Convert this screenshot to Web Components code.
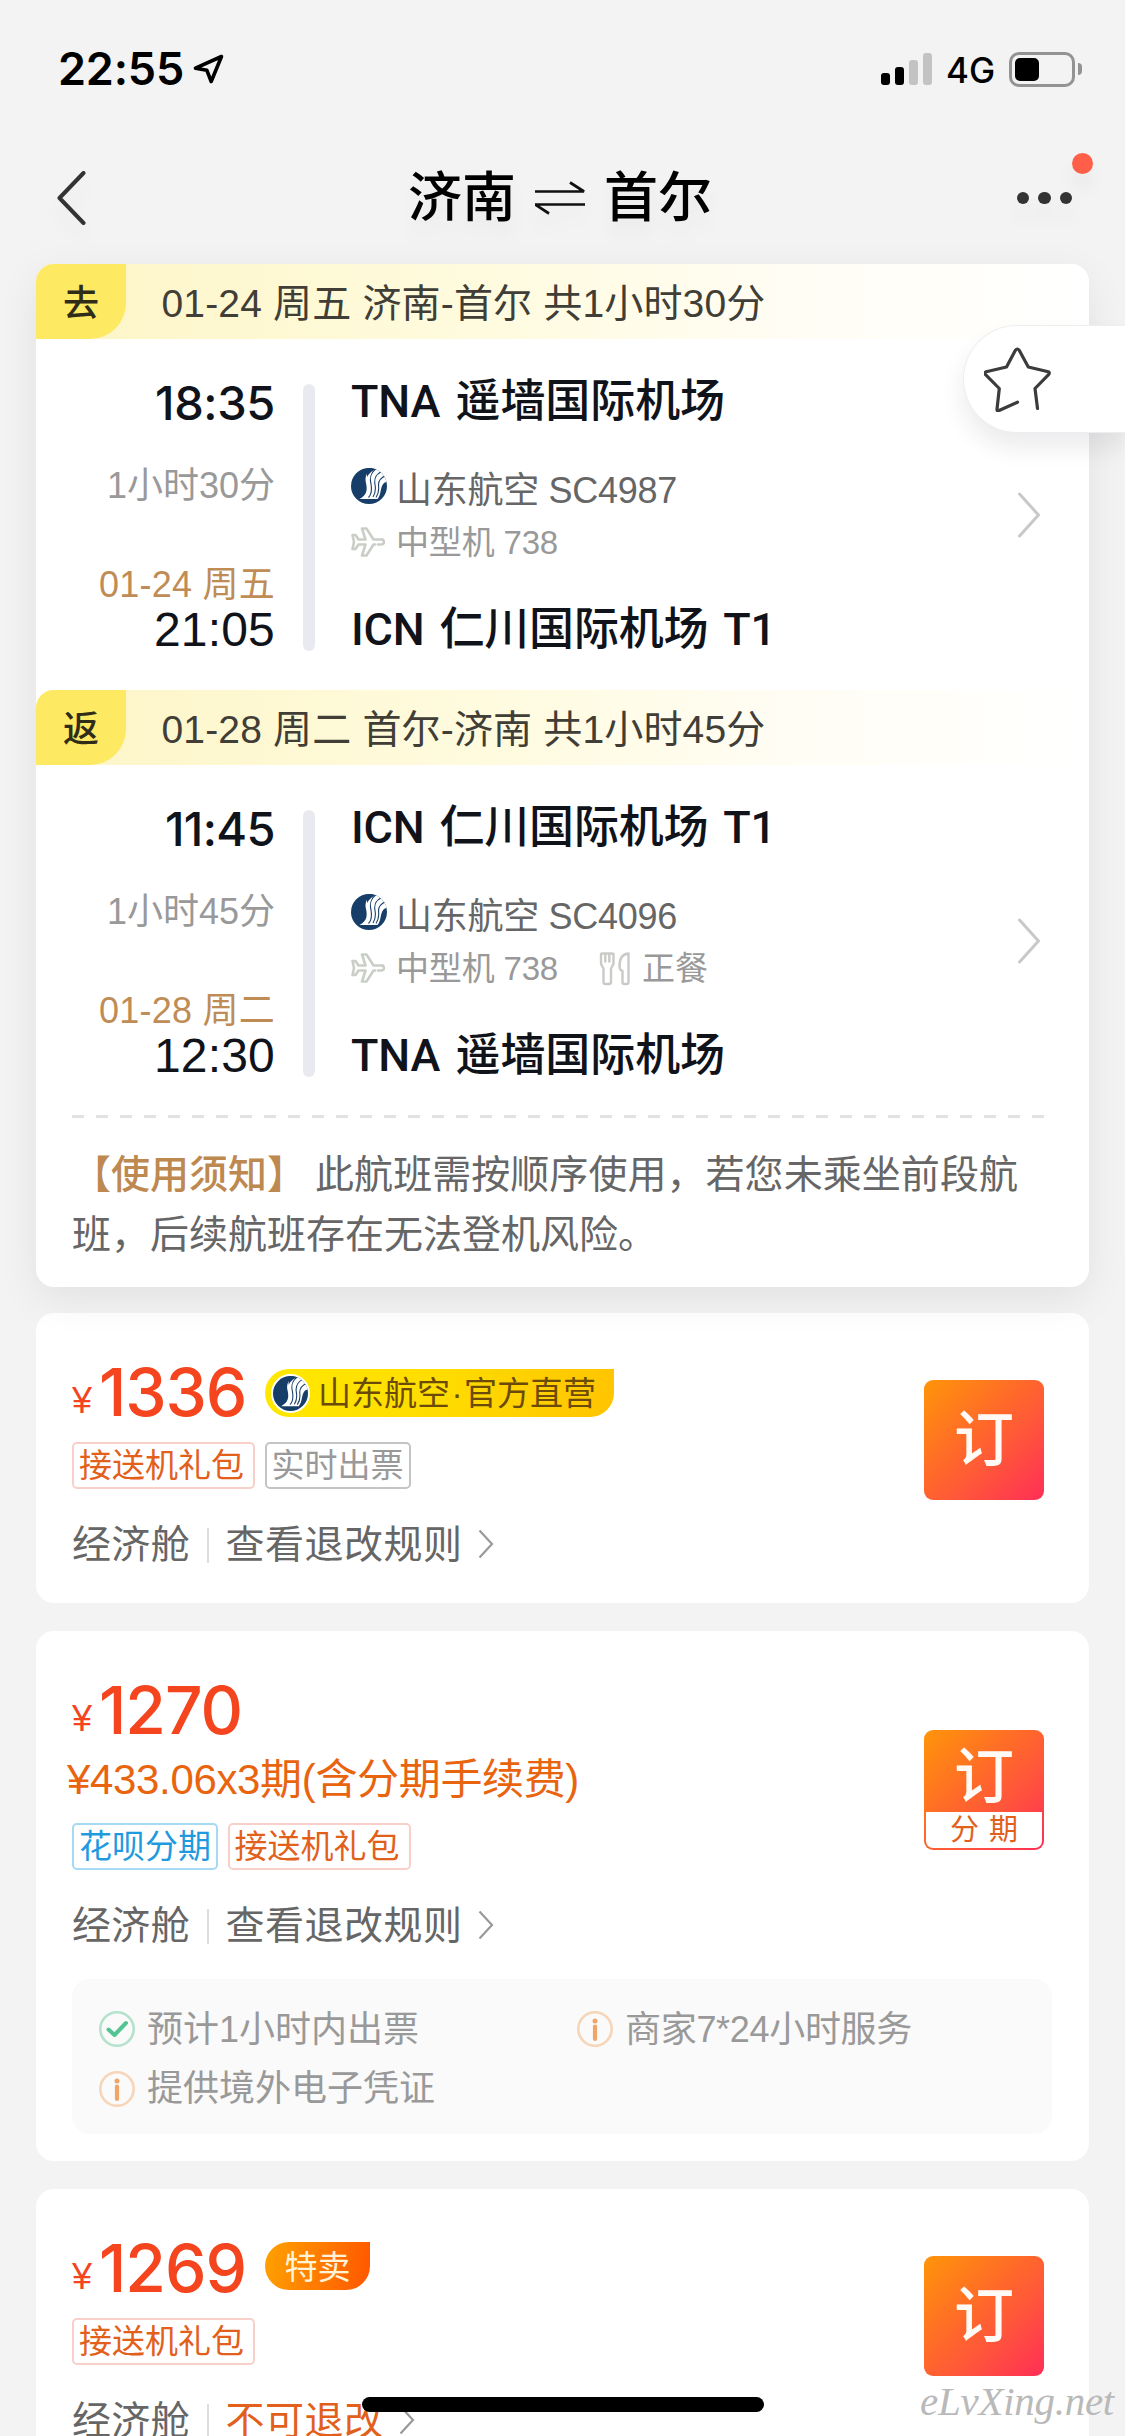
<!DOCTYPE html>
<html lang="zh-CN">
<head>
<meta charset="utf-8">
<title>济南 ⇌ 首尔</title>
<style>
html,body{margin:0;padding:0}
body{width:1125px;height:2436px;overflow:hidden;background:#f3f3f3;font-family:"Liberation Sans","Noto Sans CJK SC",sans-serif}
</style>
</head>
<body>
<flight-page></flight-page>
<script>
const def=(name,html,setup)=>customElements.define(name,class extends HTMLElement{
  constructor(){super();this.attachShadow({mode:'open'});}
  connectedCallback(){
    const a=k=>this.getAttribute(k)||'';
    this.shadowRoot.innerHTML=typeof html==='function'?html(a,this):html;
    if(setup)setup(this,a);
  }
});

/* One line of text. s: size, h: line height, w: set width reached by tracking, f: ui | label */
const FONTS={ui:'Inter,"Noto Sans CJK SC",sans-serif',label:'Roboto,"Noto Sans CJK SC",sans-serif'};
def('text-run',a=>`<style>
:host{display:block;flex:none;white-space:nowrap;font-size:${a('s')}px;line-height:${a('h')||50}px;height:${a('h')||50}px;
${a('f')?`font-family:${FONTS[a('f')]};`:''}${a('f')==='label'?'word-spacing:4px;':''}${a('wt')?`font-weight:${a('wt')};`:''}${a('c')?`color:${a('c')};`:''}}
span{display:inline-block;vertical-align:top}
</style><span><slot></slot></span>`,(el,a)=>{
  const w=+a('w');if(!w)return;
  const sp=el.shadowRoot.querySelector('span');
  const n=[...el.textContent].length;
  sp.style.letterSpacing=((w-sp.getBoundingClientRect().width)/n).toFixed(3)+'px';
});

def('airline-logo',a=>`<style>:host{display:block;flex:none;width:${a('size')||36}px;height:${a('size')||36}px}svg{display:block;width:100%;height:100%}</style>
<svg viewBox="0 0 36 36"><defs><clipPath id="c"><circle cx="18" cy="18" r="18"/></clipPath></defs>
<circle cx="18" cy="18" r="18" fill="#173e68"/>
<g clip-path="url(#c)"><path d="M22 0C15.500 4 13.500 9 15 15C16.500 22 16 27 8.500 31H26.500C30 27 29 22 31.500 17C32.500 15 34 14 36 14V0Z" fill="#fff"/>
<path d="M26 0C19 5 18.500 10 20 16C21 22 20 27 17.500 29.500M30.500 3.500C24 7 23 11 24 16.500C25 22 24 26 22 29M35 7.500C29 10 27 13 27.600 18C28 22 27.500 26 25 29.500" fill="none" stroke="#173e68" stroke-width="1.100"/>
<path d="M16 0H27C22 2 18 5 16 9Z" fill="#173e68"/></g></svg>`);

const ICONS={
plane:[34,30,'<path d="M32 12.500H22.500L15.500 1.500H11L14.500 12.500H7.500L4.500 8H1.500L3 15L1.500 22H4.500L7.500 17.500H14.500L11 28.500H15.500L22.500 17.500H24M27 17.500H30C34 17.500 34 12.500 30 12.500" fill="none" stroke="#c9cfc7" stroke-width="2.600" stroke-linejoin="round" stroke-linecap="round"/>'],
meal:[32,34,'<path d="M2 2.500V11C2 14 4.500 15 4.500 17V30Q4.500 32 6.500 32H10Q12 32 12 30V17C12 15 14.500 14 14.500 11V2.500Q14.500 1.500 13 1.500H3.500Q2 1.500 2 2.500ZM6.300 2V10.500M10.300 2V10.500M29.500 1.500C22.500 2 20.500 8 20.500 14C20.500 17 22 18.500 23.500 19V30Q23.500 32 25.500 32H27.500Q29.500 32 29.500 30Z" fill="none" stroke="#c9cbc7" stroke-width="2.400" stroke-linejoin="round"/>'],
next:[24,46,'<path d="M2.500 2L21.500 23L2.500 44" fill="none" stroke="#c8c8c8" stroke-width="3" stroke-linecap="round" stroke-linejoin="round"/>'],
more:[16,30,'<path d="M1.500 1.500L14 15L1.500 28.500" fill="none" stroke="#999" stroke-width="2.200"/>'],
back:[30,54,'<path d="M26.500 2L2.500 27L26.500 52" fill="none" stroke="#333" stroke-width="4" stroke-linecap="round" stroke-linejoin="round"/>'],
swap:[50,34,'<path d="M0 10.500H49L35 1.500M50 23.500H0L14 32.500" fill="none" stroke="#111" stroke-width="2.700" stroke-linejoin="bevel"/>'],
star:[68,66,'<path d="M35.500 55.200L16.500 63.800Q14.800 64.200 15 62.200L17.300 41.500L3.300 27.300Q2 25.500 4.200 24.800L24.500 20L33.400 3.200Q35.300 .800 37.200 3.200L46.300 20L66.300 24.800Q68 25.500 66.800 27.300L53 41.500L55.500 61.500" transform="translate(-2 1)" fill="none" stroke="#3c3c3c" stroke-width="3.200" stroke-linecap="round" stroke-linejoin="round"/>'],
locate:[32,32,'<path d="M28.500 3.500L2.500 15.200L13.800 17.200L18.200 28.500Z" fill="none" stroke="#000" stroke-width="3.600" stroke-linejoin="round"/>'],
ok:[36,36,'<circle cx="18" cy="18" r="16.700" fill="none" stroke="#b5e2cc" stroke-width="2.600"/><path d="M9.500 18.500L15.500 24L27 12" fill="none" stroke="#53c492" stroke-width="4" stroke-linecap="round" stroke-linejoin="round"/>'],
info:[36,36,'<circle cx="18" cy="18" r="16.700" fill="none" stroke="#f7d5b8" stroke-width="2.600"/><circle cx="18" cy="10" r="2.500" fill="#efa468"/><path d="M18 15.500V28" stroke="#efa468" stroke-width="4.200" stroke-linecap="round"/>']
};
def('line-icon',a=>{const[w,h,p]=ICONS[a('name')];return `<style>:host{display:block;flex:none;width:${w}px;height:${h}px}svg{display:block}</style><svg width="${w}" height="${h}" viewBox="0 0 ${w} ${h}">${p}</svg>`});

def('status-bar',`<style>
:host{display:flex;align-items:center;height:138px;padding:0 43px 0 58px;box-sizing:border-box;color:#000}
line-icon{margin-left:9px}
.bars{margin-left:auto;display:flex;align-items:flex-end;gap:5px;height:32px}
.bars i{width:9px;border-radius:3px;background:#000}.bars .o{background:#c3c3c3}
.net{margin:1px 0 0 14px}
.bat{margin-left:14px;width:66px;height:35px;box-sizing:border-box;border:3px solid #939393;border-radius:10px;padding:3px}
.bat i{display:block;width:24px;height:23px;border-radius:5px;background:#000}
.cap{width:4px;height:12px;margin-left:3px;border-radius:0 4px 4px 0;background:#939393}
</style>
<text-run s="45" h="50" w="126" f="ui" wt="600">22:55</text-run><line-icon name="locate"></line-icon>
<div class="bars"><i style="height:12px"></i><i style="height:18px"></i><i class="o" style="height:25px"></i><i class="o" style="height:32px"></i></div>
<text-run class="net" s="35" h="50" w="49" f="ui" wt="500">4G</text-run>
<div class="bat"><i></i></div><div class="cap"></div>`);

def('nav-bar',`<style>
:host{display:grid;grid-template-columns:1fr auto 1fr;align-items:center;height:126px;padding:0 53px 6px 57px;box-sizing:border-box;filter:drop-shadow(0 14px 8px rgba(0,0,0,.04))}
.title{display:flex;align-items:center;gap:19px;color:#000;margin-right:9px}
.dots{justify-self:end;display:flex;gap:9px;position:relative}
.dots i{width:12.500px;height:12.500px;border-radius:50%;background:#333}
.dots b{position:absolute;right:-21px;top:-39px;width:21px;height:21px;border-radius:50%;background:#ff5f49}
</style>
<line-icon name="back"></line-icon>
<div class="title"><text-run s="54" h="70" wt="500">济南</text-run><line-icon name="swap"></line-icon><text-run s="54" h="70" wt="500">首尔</text-run></div>
<div class="dots"><i></i><i></i><i></i><b></b></div>`);

def('favorite-tab',`<style>
:host{position:absolute;right:0;top:325px;z-index:5;display:flex;align-items:center;width:162px;height:108px;box-sizing:border-box;padding:0 0 1px 20px;border-radius:54px 0 0 54px;border:1px solid #eee;border-right:0;background:#fff;box-shadow:0 14px 24px rgba(30,30,60,.09)}
</style><line-icon name="star"></line-icon>`);

def('flight-leg',a=>`<style>
:host{display:block;height:426px}
.head{display:flex;height:75px;background:linear-gradient(90deg,#fdf5c6 0,#fffbe0 45%,#fffdf3 70%,#fff 100%);border-radius:18px 18px 0 0;color:#403e36}
.kind{width:90px;height:75px;box-sizing:border-box;padding-top:2px;display:flex;justify-content:center;background:#fee963;border-radius:18px 0 36px 0;color:#2f2c18}
.sum{margin:2px 0 0 35.500px}
.body{display:flex;align-items:flex-start}
.times{width:239px;display:flex;flex-direction:column;align-items:flex-end;padding-top:39px;color:#10131a}
.bar{width:12px;height:267px;margin:45px 36px 0 28px;border-radius:6px;background:#e9eaf0}
.info{flex:1;padding-top:38px;color:#10131a}
.air{display:flex;align-items:flex-start;height:42px;margin-top:41px}
.eq{display:flex;align-items:center;height:40px;margin-top:12px}
line-icon[name=next]{margin:153px 48px 0 0}
</style>
<div class="head"><div class="kind"><text-run s="36" h="75" wt="500">${a('kind')}</text-run></div><text-run class="sum" s="39" h="75" w="604">${a('summary')}</text-run></div>
<div class="body">
<div class="times">
<text-run s="47" h="50" w="${a('dw')}" f="ui" wt="500">${a('depart')}</text-run>
<text-run s="36" h="50" w="168" c="#999" style="margin-top:33px">${a('duration')}</text-run>
<text-run s="36" h="40" w="176" c="#c08c56" style="margin-top:54px">${a('date')}</text-run>
<text-run s="48" h="50" w="121">${a('arrive')}</text-run>
</div>
<div class="bar"></div>
<div class="info">
<text-run s="45" h="50" w="${a('fw')}" f="label" wt="500">${a('from')}</text-run>
<div class="air"><airline-logo></airline-logo><text-run s="36" h="40" w="281" c="#666" style="margin:3px 0 0 9px">${a('flight')}</text-run></div>
<div class="eq"><line-icon name="plane"></line-icon><text-run s="33" h="40" w="162" c="#999" style="margin:1px 0 -1px 11px">中型机 738</text-run>
${a('meal')?`<line-icon name="meal" style="margin:2px 11px 0 41px"></line-icon><text-run s="33" h="40" c="#999" style="margin:1px 0 -1px">${a('meal')}</text-run>`:''}</div>
<text-run s="45" h="50" w="${a('tw')}" f="label" wt="500" style="margin-top:43px">${a('to')}</text-run>
</div>
<line-icon name="next"></line-icon>
</div>`);

def('trip-card',`<style>
:host{display:block;position:relative;z-index:2;margin:0 36px;height:1023px;border-radius:18px;background:#fff;box-shadow:0 12px 42px rgba(0,0,0,.075)}
.cut{height:3px;margin:-1px 44px 0 36px;background:repeating-linear-gradient(90deg,#e2e2e2 0 12px,transparent 12px 24px)}
.note{padding:27px 0 0 36px;color:#666}
.row{display:flex;gap:11px}
</style>
<slot></slot>
<div class="cut"></div>
<div class="note"><div class="row"><text-run s="39" h="60" c="#bd8950" wt="500">【使用须知】</text-run><text-run s="39" h="60" w="703" style="margin-left:-2px">此航班需按顺序使用，若您未乘坐前段航</text-run></div>
<text-run s="39" h="60">班，后续航班存在无法登机风险。</text-run></div>`);

def('small-tag',a=>{const k={hot:['#f9cfca','#e25f1c'],plain:['#c4c4c4','#999'],blue:['#a6d9f3','#1f9ade']}[a('kind')];
return `<style>:host{display:block;flex:none;box-sizing:border-box;height:47px;padding:0 ${a('kind')==='hot'?9:5}px 0 5px;border:2px solid ${k[0]};border-radius:5px;color:${k[1]}}</style><text-run s="33" h="43" w="${a('w')}"><slot></slot></text-run>`});

def('seller-badge',`<style>
:host{display:flex;align-items:center;width:349px;height:48px;border-radius:24px 0 24px 24px;background:linear-gradient(100deg,#ffe800,#ffdc00 50%,#ffc400);color:#6b4a0a;box-sizing:border-box;padding-left:6px}
.r{border-radius:50%;background:#fff;padding:2px;margin-right:8px}
</style><div class="r"><airline-logo size="35"></airline-logo></div><text-run s="33" h="48" style="padding-top:2px">山东航空</text-run><text-run s="33" h="48" style="width:14px;display:flex;justify-content:center;padding-top:1px">·</text-run><text-run s="33" h="48" style="padding-top:2px">官方直营</text-run>`);

def('sale-badge',`<style>
:host{display:flex;justify-content:center;width:105px;height:48px;border-radius:24px 0 24px 24px;background:linear-gradient(100deg,#ffa200,#ff5600);color:#fff3d8}
</style><text-run s="33" h="51"><slot></slot></text-run>`);

def('book-button',a=>`<style>
:host{display:block;flex:none;width:120px;height:120px;box-sizing:border-box;border-radius:9px;overflow:hidden;background:linear-gradient(135deg,#ff9509 0,#ff672b 45%,#ff5a38 60%,#ff2e56 100%);color:#fffaf5;text-align:center}
.top{padding-top:${a('plan')?7:2}px;height:${a('plan')?75:118}px}
.sub{height:36px;margin:0 2px;border-radius:0 0 7px 7px;background:#fff;color:#e25f1c;display:flex;justify-content:center;gap:10px}
</style><div class="top"><text-run s="60" h="${a('plan')?82:118}" wt="500">订</text-run></div>
${a('plan')?`<div class="sub"><text-run s="29" h="37">分</text-run><text-run s="29" h="37">期</text-run></div>`:''}`);

def('fare-card',a=>`<style>
:host{display:block;margin:0 36px 28px;background:#fff;border-radius:18px}
.main{display:flex;align-items:flex-start;justify-content:space-between;padding:48px 45px 0 36px}
.price{display:flex;align-items:flex-start;height:60px;color:#f4451f}
.tags{display:flex;gap:9.500px}
.cabin{display:flex;align-items:center;height:40px;margin-top:36px;color:#666}
.cabin i{width:2.500px;height:35px;margin:0 16px 0 17px;background:#ddd}
</style>
<div class="main"><div>
<div class="price"><text-run s="36" h="60" style="margin-top:10px">¥</text-run><text-run s="66" h="60" w="${a('pw')}" f="ui" wt="500" style="margin:1px ${265-99-a('pw')}px 0 7px">${a('price')}</text-run><slot name="badge"></slot></div>
${a('plan')?`<text-run s="42" h="50" w="512" c="#e9640f" style="margin:16px 0 -2px -5px">${a('plan')}</text-run>`:''}
<div class="tags" style="margin-top:${a('plan')?20:21}px"><slot name="tag"></slot></div>
<div class="cabin"><text-run s="39" h="40" w="118">经济舱</text-run><i></i><text-run s="39" h="40" w="${a('strict')?158:237}" c="${a('strict')?'#e25f1c':'#666'}">${a('rule')}</text-run><line-icon name="more" style="margin-left:16px;margin-top:-2px"></line-icon></div>
</div><book-button ${a('plan')?'plan="1"':''} style="margin-top:${a('plan')?51:19}px"></book-button></div>
<slot></slot>`);

def('service-list',`<style>
:host{display:grid;grid-template-columns:478px auto;grid-auto-rows:60px;align-content:start;margin:33px 37px 0 36px;height:155px;box-sizing:border-box;padding:20px 26px 20px 27px;background:#fafafa;border-radius:18px;color:#999}
div{display:flex;align-items:center;gap:12px}
</style>
<div><line-icon name="ok"></line-icon><text-run s="36" h="60" w="272" style="padding-top:2px">预计1小时内出票</text-run></div>
<div><line-icon name="info"></line-icon><text-run s="36" h="60" w="287" style="padding-top:2px">商家7*24小时服务</text-run></div>
<div><line-icon name="info"></line-icon><text-run s="36" h="60">提供境外电子凭证</text-run></div>`);

def('home-indicator',`<style>:host{display:block;position:absolute;z-index:6;left:362px;bottom:24px;width:402px;height:15px;border-radius:8px;background:#000}</style>`);
def('site-mark',`<style>:host{display:block;position:absolute;z-index:6;right:11px;bottom:10px;font-family:"Liberation Serif",serif;font-style:italic;color:#b9b9b9}</style><text-run s="41" h="50" w="194">eLvXing.net</text-run>`);

def('flight-page',`<style>
:host{display:block;position:relative;width:1125px;height:2436px;overflow:hidden;background:#f3f3f3}
trip-card{margin-bottom:26px}
</style>
<status-bar></status-bar>
<nav-bar></nav-bar>
<trip-card>
<flight-leg kind="去" summary="01-24 周五 济南-首尔 共1小时30分" depart="18:35" dw="120" duration="1小时30分" date="01-24 周五" arrive="21:05" from="TNA 遥墙国际机场" fw="374" to="ICN 仁川国际机场 T1" tw="425" flight="山东航空 SC4987"></flight-leg>
<flight-leg kind="返" summary="01-28 周二 首尔-济南 共1小时45分" depart="11:45" dw="110" duration="1小时45分" date="01-28 周二" arrive="12:30" from="ICN 仁川国际机场 T1" fw="425" to="TNA 遥墙国际机场" tw="374" flight="山东航空 SC4096" meal="正餐"></flight-leg>
</trip-card>
<fare-card price="1336" pw="147" rule="查看退改规则" style="height:290px"><seller-badge slot="badge" style="margin-top:8px"></seller-badge><small-tag slot="tag" kind="hot" w="165">接送机礼包</small-tag><small-tag slot="tag" kind="plain" w="132">实时出票</small-tag></fare-card>
<fare-card price="1270" pw="143" plan="¥433.06x3期(含分期手续费)" rule="查看退改规则" style="height:530px"><small-tag slot="tag" kind="blue" w="132">花呗分期</small-tag><small-tag slot="tag" kind="hot" w="165">接送机礼包</small-tag><service-list></service-list></fare-card>
<fare-card price="1269" pw="147" rule="不可退改" strict="1" style="height:290px"><sale-badge slot="badge" style="margin-top:5px">特卖</sale-badge><small-tag slot="tag" kind="hot" w="165">接送机礼包</small-tag></fare-card>
<favorite-tab></favorite-tab>
<home-indicator></home-indicator>
<site-mark></site-mark>`);
</script>
</body>
</html>
